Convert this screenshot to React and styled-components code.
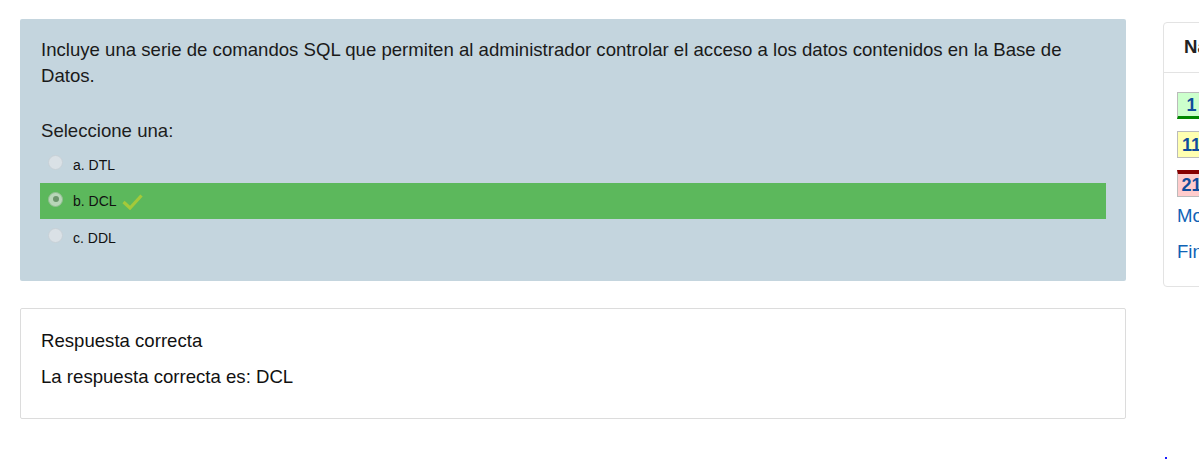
import React from 'react';
import styled, { createGlobalStyle } from 'styled-components';

const GlobalStyle = createGlobalStyle`
    html, body {
        margin: 0;
        padding: 0;
        background: #fff;
        overflow: hidden;
    }
    body {
        font-family: "Liberation Sans", Arial, sans-serif;
        color: #1d1d1d;
    }
`;

const Page = styled.div`
    display: flex;
    align-items: flex-start;
    gap: 37px;
    padding: 19px 0 0 20px;
    width: 1500px;
    height: 470px;
    box-sizing: border-box;
    position: relative;
`;

const MainColumn = styled.div`
    display: flex;
    flex-direction: column;
    gap: 27px;
    width: 1106px;
    flex-shrink: 0;
`;

const QuestionCard = styled.div`
    background: #c4d5de;
    border-radius: 2px;
    padding: 18px 20px 25px 21px;
`;

const QuestionText = styled.p`
    margin: 0 0 29px;
    font-size: 18.6px;
    line-height: 26px;
    color: #1a1a1a;
`;

const Prompt = styled.div`
    font-size: 18.6px;
    line-height: 26px;
    margin-bottom: 2px;
`;

const Options = styled.div`
    display: flex;
    flex-direction: column;
`;

const Option = styled.label`
    display: flex;
    align-items: center;
    height: ${p => (p.$correct ? '36px' : '37px')};
    margin: 0 0 0 -1px;
    padding-left: 8px;
    background: ${p => (p.$correct ? '#5cb85c' : 'transparent')};
    font-size: 14px;
    color: #111;
`;

const Radio = styled.span`
    width: 13px;
    height: 13px;
    border-radius: 50%;
    background: ${p => (p.$checked ? '#c9dcc9' : '#dfe4e8')};
    border: 1px solid ${p => (p.$checked ? '#9bbf9b' : '#c8d0d6')};
    margin-right: 10px;
    margin-top: -4px;
    display: flex;
    align-items: center;
    justify-content: center;
    opacity: 0.85;

    &::after {
        content: '';
        display: ${p => (p.$checked ? 'block' : 'none')};
        width: 6px;
        height: 6px;
        border-radius: 50%;
        background: #6f8f6f;
    }
`;

const Check = styled.svg`
    margin-left: 5px;
    margin-top: 2px;
`;

const FeedbackCard = styled.div`
    border: 1px solid #dcdcdc;
    border-radius: 2px;
    padding: 19px 20px 28px;
    font-size: 18.6px;
    line-height: 26px;
    color: #111;

    p {
        margin: 0 0 10px;
    }
    p:last-child {
        margin: 0;
    }
`;

const NavPanel = styled.div`
    margin-top: 3px;
    width: 300px;
    height: 265px;
    border: 1px solid #e3e3e3;
    border-radius: 4px;
    box-sizing: border-box;
    flex-shrink: 0;
`;

const NavHeader = styled.div`
    height: 50px;
    border-bottom: 1px solid #e3e3e3;
    padding: 13px 0 0 20px;
    box-sizing: border-box;
    font-size: 18.6px;
    font-weight: bold;
    color: #222;
    white-space: nowrap;
`;

const NavBody = styled.div`
    padding: 19px 0 0 13px;
    display: flex;
    flex-direction: column;
    gap: 12px;
`;

const NavButton = styled.div`
    width: 29px;
    height: 27px;
    box-sizing: border-box;
    border: 1px solid #bbb;
    background: ${p => p.$bg};
    border-top: ${p => (p.$top ? `4px solid ${p.$top}` : '1px solid #bbb')};
    border-bottom: ${p => (p.$bottom ? `3px solid ${p.$bottom}` : '1px solid #bbb')};
    font-size: 18px;
    font-weight: bold;
    color: #0f4c9c;
    display: flex;
    align-items: center;
    justify-content: center;
    line-height: 1;
    white-space: nowrap;
`;

const NavLink = styled.a`
    display: block;
    color: #0f63b6;
    font-size: 18.6px;
    text-decoration: none;
    line-height: 26px;
    white-space: nowrap;
`;

const Links = styled.div`
    display: flex;
    flex-direction: column;
    gap: 10px;
    margin-top: -6px;
`;

const Dot = styled.span`
    position: absolute;
    left: 1165px;
    top: 457px;
    width: 2px;
    height: 2px;
    background: #1a1aff;
`;

const options = [
    { letter: 'a', text: 'DTL' },
    { letter: 'b', text: 'DCL', correct: true },
    { letter: 'c', text: 'DDL' },
];

function App() {
    return (
        <>
            <GlobalStyle />
            <Page>
                <MainColumn>
                    <QuestionCard>
                        <QuestionText>
                            Incluye una serie de comandos SQL que permiten al administrador controlar el acceso a los datos contenidos en la Base de Datos.
                        </QuestionText>
                        <Prompt>Seleccione una:</Prompt>
                        <Options>
                            {options.map(o => (
                                <Option key={o.letter} $correct={o.correct}>
                                    <Radio $checked={o.correct} />
                                    {o.letter}. {o.text}
                                    {o.correct && (
                                        <Check width="21" height="16" viewBox="0 0 21 16">
                                            <polyline
                                                points="1.5,8 8,14 19.5,1.5"
                                                fill="none"
                                                stroke="#a4c93a"
                                                strokeWidth="3.2"
                                                strokeLinejoin="miter"
                                            />
                                        </Check>
                                    )}
                                </Option>
                            ))}
                        </Options>
                    </QuestionCard>
                    <FeedbackCard>
                        <p>Respuesta correcta</p>
                        <p>La respuesta correcta es: DCL</p>
                    </FeedbackCard>
                </MainColumn>
                <NavPanel>
                    <NavHeader>Navegación por el cuestionario</NavHeader>
                    <NavBody>
                        <NavButton $bg="#cfc" $bottom="#080">1</NavButton>
                        <NavButton $bg="#ffffb0">11</NavButton>
                        <NavButton $bg="#fcc" $top="#800">21</NavButton>
                        <Links>
                            <NavLink href="#">Mostrar una página cada vez</NavLink>
                            <NavLink href="#">Finalizar revisión</NavLink>
                        </Links>
                    </NavBody>
                </NavPanel>
                <Dot />
            </Page>
        </>
    );
}

export default App;
